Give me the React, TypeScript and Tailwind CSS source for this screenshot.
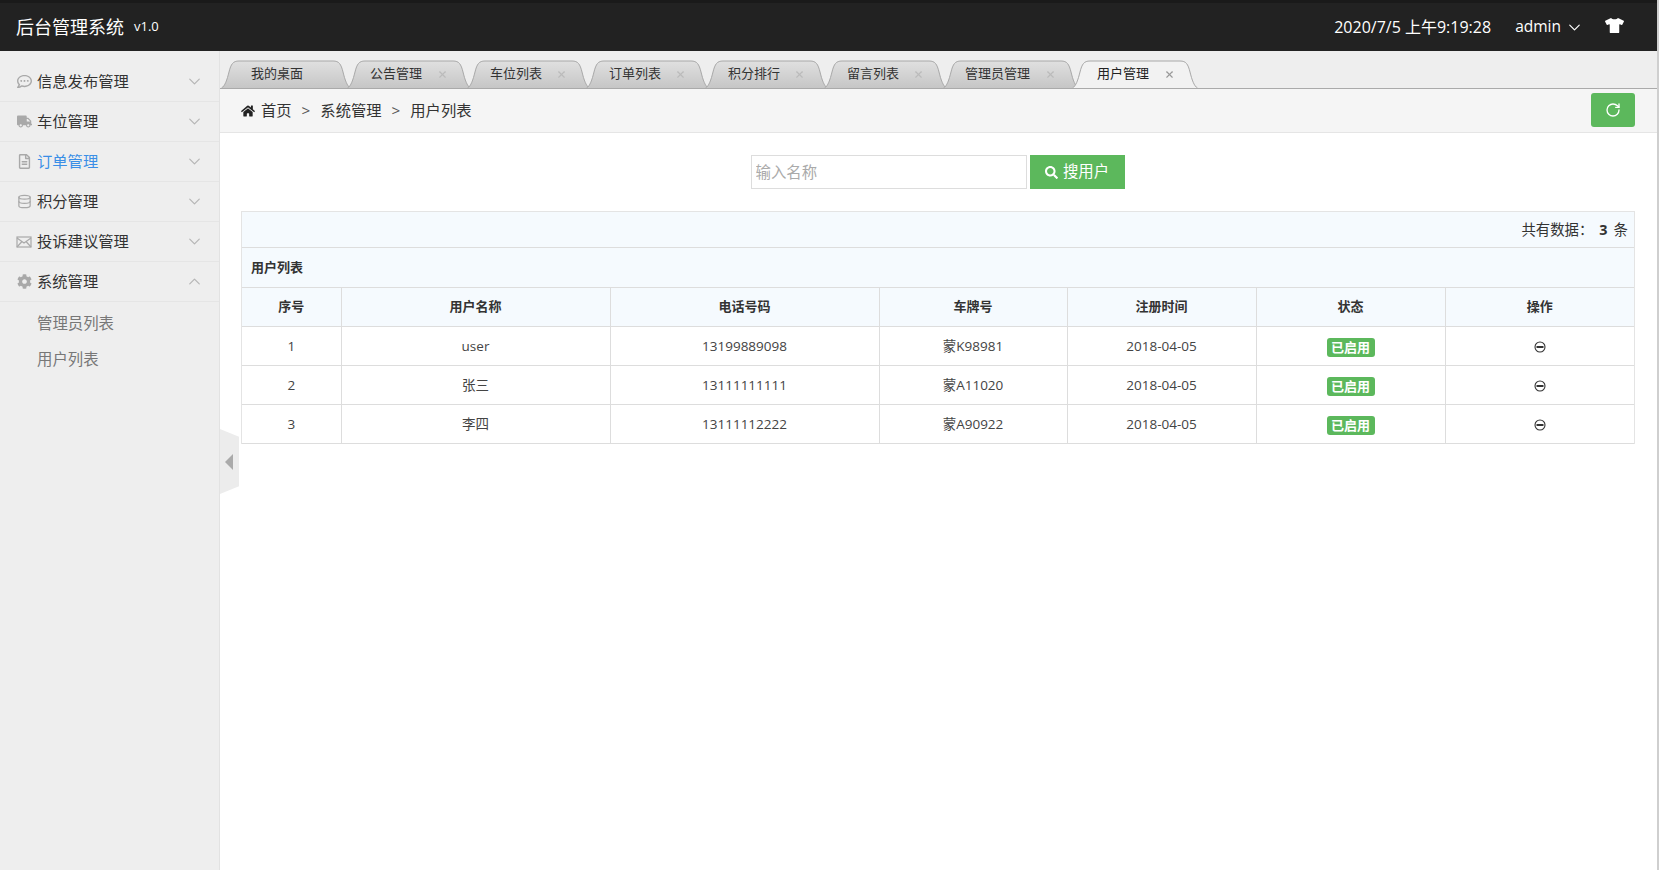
import { ChevronDown, ChevronUp, Database, RotateCw, X } from "lucide-react"
import { FaCog, FaHome, FaRegCommentDots, FaRegFileAlt, FaSearch, FaTruck, FaTshirt } from "react-icons/fa"

function MailIcon({ className }: { className?: string }) {
  return (
    <svg className={className} width="16" height="14" viewBox="0 0 16 14" fill="none" stroke="currentColor" strokeWidth="1.2">
      <rect x="1" y="2" width="14" height="10" />
      <path d="M1 3l7 5 7-5M1 12l5-5.5M15 12l-5-5.5" />
    </svg>
  )
}

function DatabaseIcon({ className }: { className?: string }) {
  return <Database className={className} size={15} strokeWidth={2} />
}

const menu = [
  { name: "信息发布管理", icon: FaRegCommentDots },
  { name: "车位管理", icon: FaTruck },
  { name: "订单管理", icon: FaRegFileAlt, active: true },
  { name: "积分管理", icon: DatabaseIcon },
  { name: "投诉建议管理", icon: MailIcon },
  { name: "系统管理", icon: FaCog, open: true },
]

const tabs = [
  { name: "我的桌面", width: 130, left: 30 },
  { name: "公告管理", width: 124, left: 23, close: true },
  { name: "车位列表", width: 123, left: 23, close: true },
  { name: "订单列表", width: 123, left: 23, close: true },
  { name: "积分排行", width: 123, left: 23, close: true },
  { name: "留言列表", width: 123, left: 23, close: true },
  { name: "管理员管理", width: 136, left: 22, close: true },
  { name: "用户管理", width: 126, left: 25, close: true, active: true },
]

const columns = [
  { name: "序号", width: "w-[99px]" },
  { name: "用户名称", width: "w-[269px]" },
  { name: "电话号码", width: "w-[269px]" },
  { name: "车牌号", width: "w-[188px]" },
  { name: "注册时间", width: "w-[189px]" },
  { name: "状态", width: "w-[189px]" },
  { name: "操作", width: "w-[189px]" },
]

const users = [
  { id: 1, name: "user", phone: "13199889098", plate: "蒙K98981", date: "2018-04-05" },
  { id: 2, name: "张三", phone: "13111111111", plate: "蒙A11020", date: "2018-04-05" },
  { id: 3, name: "李四", phone: "13111112222", plate: "蒙A90922", date: "2018-04-05" },
]

function Tab({ name, width, left, close, active }: { name: string; width: number; left: number; close?: boolean; active?: boolean }) {
  const path = `M0.5 28 C4 26 6 20 8 12 C10 4 12 1 18 1 L${width - 18} 1 C${width - 12} 1 ${width - 10} 4 ${width - 8} 12 C${width - 6} 20 ${width - 4} 26 ${width - 0.5} 28`
  return (
    <div className={`relative h-[29px] shrink-0 ${active ? "z-10 -ml-[3px] text-[#222]" : "-mr-[4px] text-[#333]"}`} style={{ width }}>
      <svg className="absolute inset-0 h-full w-full" viewBox={`0 0 ${width} 29`} fill="none">
        <defs>
          <linearGradient id="tab-grey" x1="0" y1="0" x2="0" y2="1">
            <stop offset="0" stopColor="#e0e0e0" />
            <stop offset="1" stopColor="#c6c6c6" />
          </linearGradient>
        </defs>
        <path d={path} fill={active ? "#f2f2f2" : "url(#tab-grey)"} stroke="#a8a8a8" />
      </svg>
      <span className="absolute top-[3px] text-[13px] leading-[20px]" style={{ left }}>
        {name}
      </span>
      {close && (
        <X
          className={`absolute top-[9px] ${active ? "right-[23px] text-[#999]" : "right-[23px] text-[#bbb]"}`}
          size={11}
          strokeWidth={2.5}
        />
      )}
    </div>
  )
}

function MinusCircle() {
  return (
    <svg className="inline-block text-[#333]" width="12" height="12" viewBox="0 0 12 12" fill="none" stroke="currentColor">
      <circle cx="6" cy="6" r="5" strokeWidth="1.1" />
      <path d="M2.5 6h7" strokeWidth="2" />
    </svg>
  )
}

export default function App() {
  return (
    <div className="relative flex h-[870px] flex-col overflow-hidden border-r-2 border-[#cfcfcf] bg-white font-['Open_Sans','Noto_Sans_CJK_SC',sans-serif] text-[#333]">
      <header className="flex h-[51px] shrink-0 items-center justify-between border-t-[3px] border-[#1a1a1a] bg-[#222222] pl-4 pr-[33px] text-white">
        <div className="flex items-center">
          <span className="text-[18px]">后台管理系统</span>
          <span className="ml-[10px] text-[13px] font-medium">v1.0</span>
        </div>
        <div className="flex items-center">
          <span className="text-[16px]">2020/7/5 上午9:19:28</span>
          <span className="ml-[24px] text-[15.5px]">admin</span>
          <ChevronDown className="ml-[4px] mt-[1px]" size={19} strokeWidth={1.5} />
          <FaTshirt className="ml-[21px] mb-[3px]" size={19} />
        </div>
      </header>

      <div className="flex min-h-0 flex-1">
        <aside className="w-[220px] shrink-0 border-r border-[#e2e2e2] bg-[#eeeeee] pt-[11px]">
          {menu.map((item) => {
            const Icon = item.icon
            return (
              <div
                key={item.name}
                className={`flex h-[40px] items-center border-b border-[#e5e5e5] pl-[14px] pr-[15px] text-[15.3px] ${item.active ? "text-[#3a8ee6]" : "text-[#333]"}`}
              >
                <span className="flex w-[20px] justify-center">
                  <Icon className="text-[#a9a9a9]" size={15} />
                </span>
                <span className="ml-[3px] flex-1">{item.name}</span>
                {item.open ? (
                  <ChevronUp className="text-[#b5b5b5]" size={19} strokeWidth={1.5} />
                ) : (
                  <ChevronDown className="text-[#b5b5b5]" size={19} strokeWidth={1.5} />
                )}
              </div>
            )
          })}
          <div className="pl-[37px] pt-[4px] text-[15.4px] text-[#777]">
            <div className="flex h-[36px] items-center">管理员列表</div>
            <div className="flex h-[35px] items-center">用户列表</div>
          </div>
        </aside>

        <main className="relative min-w-0 flex-1">
          <div className="flex h-[38px] items-end border-b border-[#aaaaaa] bg-[#eeeeee] pl-[1px]">
            <div className="-mb-[1px] flex">
              {tabs.map((tab) => (
                <Tab key={tab.name} {...tab} />
              ))}
            </div>
          </div>

          <div className="flex h-[44px] items-center justify-between border-b border-[#e5e5e5] bg-[#f5f5f5] pl-[21px] pr-[22px] text-[15.3px]">
            <div className="flex items-center">
              <FaHome className="mr-[6px] text-[#222]" size={14} />
              <span>首页</span>
              <span className="mx-[10px] text-[#555]">&gt;</span>
              <span>系统管理</span>
              <span className="mx-[10px] text-[#555]">&gt;</span>
              <span>用户列表</span>
            </div>
            <button className="mb-[2px] flex h-[34px] w-[44px] items-center justify-center rounded-[3px] bg-[#5cb85c] text-white">
              <RotateCw size={16} strokeWidth={2} />
            </button>
          </div>

          <div className="flex justify-center pr-[2px] pt-[22px]">
            <input
              className="h-[34px] w-[276px] border border-[#dddddd] px-[4px] text-[15.4px] outline-none placeholder:text-[#aaaaaa]"
              placeholder="输入名称"
            />
            <button className="ml-[3px] flex h-[34px] w-[95px] items-center justify-center bg-[#5cb85c] text-[15.4px] text-white">
              <FaSearch className="mr-[5px]" size={13} />
              搜用户
            </button>
          </div>

          <div className="ml-[21px] mr-[22px] mt-[22px] border border-b-0 border-[#e4e4e4] text-[13.5px]">
            <div className="flex h-[36px] items-center justify-end border-b border-[#dddddd] bg-[#f5fafe] pr-[6px] pt-[1px] text-[14.4px]">
              共有数据：<b className="mx-[6px]">3</b>条
            </div>
            <table className="w-full table-fixed border-collapse">
              <colgroup>
                {columns.map((col) => (
                  <col key={col.name} className={col.width} />
                ))}
              </colgroup>
              <thead>
                <tr className="h-[39px] bg-[#f5fafe]">
                  <th colSpan={7} className="border-b border-[#dddddd] pl-[9px] text-left text-[13px] font-semibold">
                    用户列表
                  </th>
                </tr>
                <tr className="h-[39px] bg-[#f5fafe]">
                  {columns.map((col) => (
                    <th key={col.name} className="border-b border-r border-[#dddddd] pt-[1px] text-[13px] font-semibold last:border-r-0">
                      {col.name}
                    </th>
                  ))}
                </tr>
              </thead>
              <tbody>
                {users.map((user) => (
                  <tr key={user.id} className="h-[39px] text-center text-[#444]">
                    <td className="border-b border-r border-[#dddddd] pt-[2px]">{user.id}</td>
                    <td className="border-b border-r border-[#dddddd] pt-[2px]">{user.name}</td>
                    <td className="border-b border-r border-[#dddddd] pt-[2px]">{user.phone}</td>
                    <td className="border-b border-r border-[#dddddd] pt-[2px]">{user.plate}</td>
                    <td className="border-b border-r border-[#dddddd] pt-[2px]">{user.date}</td>
                    <td className="border-b border-r border-[#dddddd]">
                      <span className="relative top-[2px] inline-block h-[19px] w-[48px] rounded-[3px] bg-[#5cb85c] text-[13px] font-bold leading-[19px] text-white">
                        已启用
                      </span>
                    </td>
                    <td className="border-b border-[#dddddd]">
                      <MinusCircle />
                    </td>
                  </tr>
                ))}
              </tbody>
            </table>
          </div>

          <div className="absolute left-0 top-[378px] flex h-[65px] w-[19px] items-center bg-[#ececec] pl-[5px] [clip-path:polygon(0_0,100%_12%,100%_88%,0_100%)]">
            <div className="h-0 w-0 border-y-[8px] border-r-[8px] border-y-transparent border-r-[#aaaaaa]" />
          </div>
        </main>
      </div>
    </div>
  )
}
